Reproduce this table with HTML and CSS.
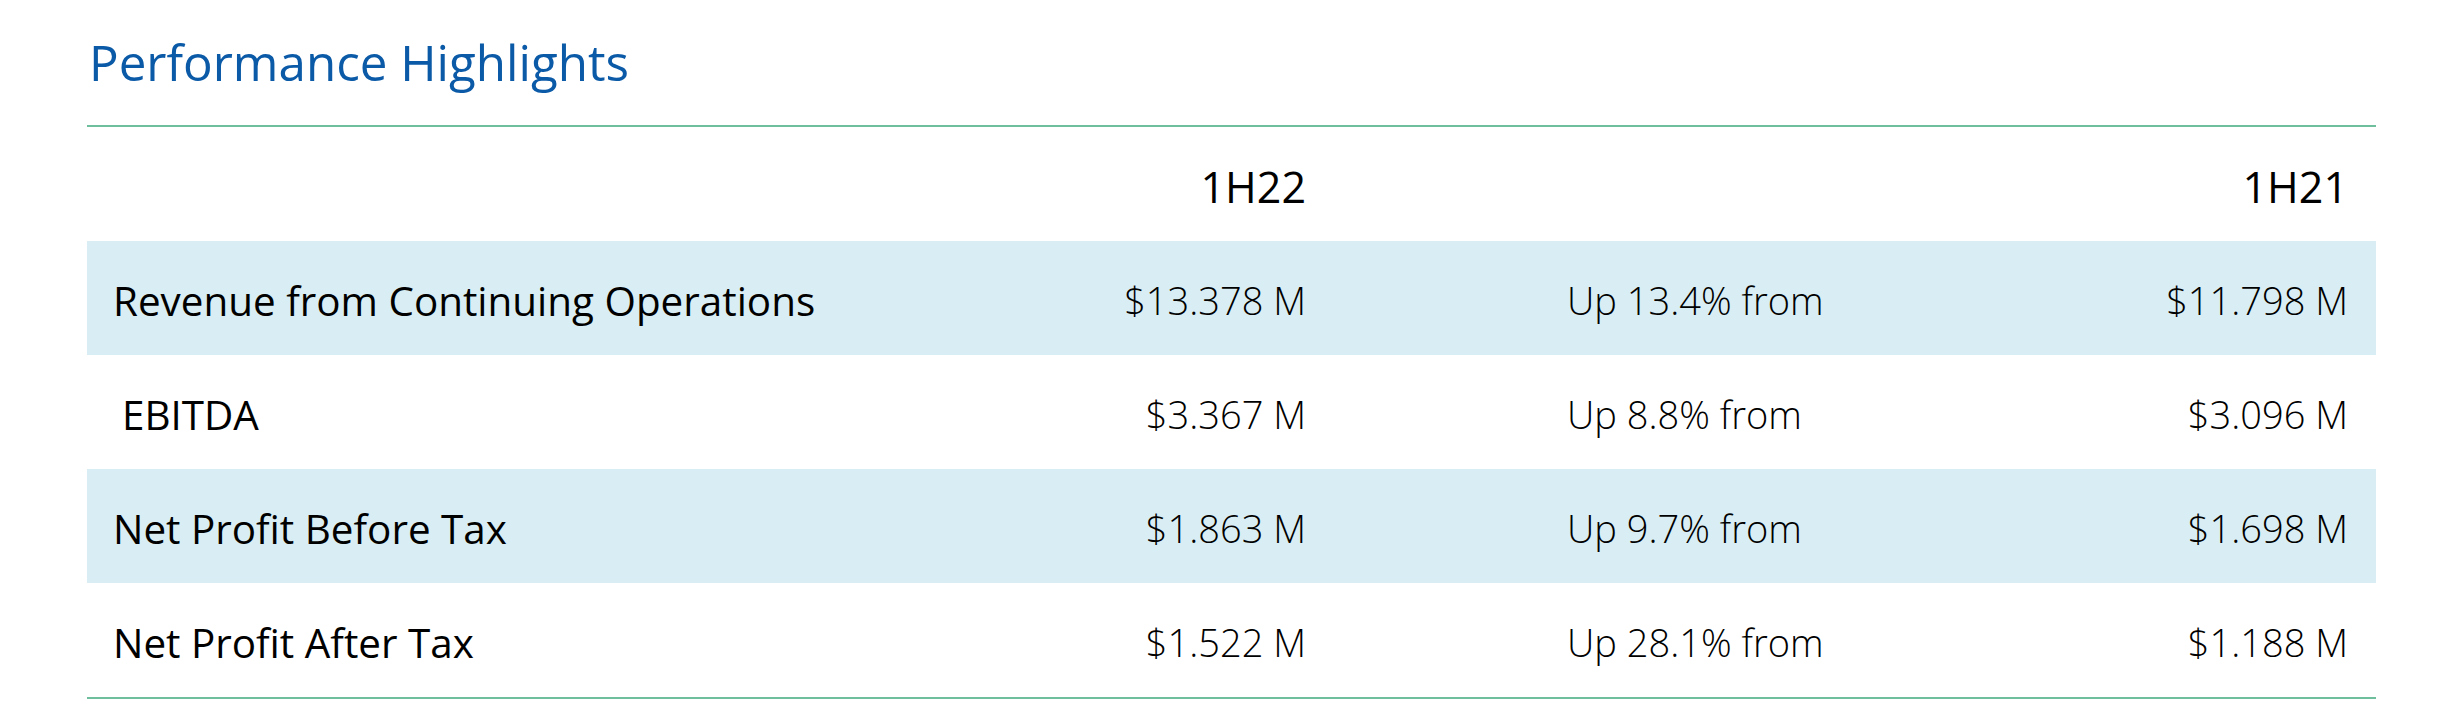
FILE: index.html
```html
<!DOCTYPE html>
<html lang="en">
<head>
<meta charset="utf-8">
<title>Performance Highlights</title>
<link rel="stylesheet" href="styles.css">
</head>
<body>
<div class="page">
  <h1 class="title">Performance Highlights</h1>
  <div class="table">
    <div class="row head">
      <div class="cell label"></div>
      <div class="cell value">1H22</div>
      <div class="cell change"></div>
      <div class="cell prior">1H21</div>
    </div>
    <div class="row shaded">
      <div class="cell label">Revenue from Continuing Operations</div>
      <div class="cell value">$13.378 M</div>
      <div class="cell change">Up 13.4% from</div>
      <div class="cell prior">$11.798 M</div>
    </div>
    <div class="row">
      <div class="cell label indent">EBITDA</div>
      <div class="cell value">$3.367 M</div>
      <div class="cell change">Up 8.8% from</div>
      <div class="cell prior">$3.096 M</div>
    </div>
    <div class="row shaded">
      <div class="cell label">Net Profit Before Tax</div>
      <div class="cell value">$1.863 M</div>
      <div class="cell change">Up 9.7% from</div>
      <div class="cell prior">$1.698 M</div>
    </div>
    <div class="row">
      <div class="cell label">Net Profit After Tax</div>
      <div class="cell value">$1.522 M</div>
      <div class="cell change">Up 28.1% from</div>
      <div class="cell prior">$1.188 M</div>
    </div>
  </div>
</div>
</body>
</html>
```

FILE: styles.css
```css
html, body {
  margin: 0;
  padding: 0;
  background: #ffffff;
}

.page {
  padding-left: 87px;
  width: 2289px;
  font-family: "Open Sans", "Noto Sans", sans-serif;
  color: #000000;
}

.title {
  margin: 0;
  height: 125px;
  box-sizing: border-box;
  padding-top: 28px;
  padding-left: 2px;
  font-size: 49.3px;
  line-height: 68px;
  font-weight: 400;
  color: #0b5aa7;
}

.table {
  border-top: 2px solid #6fbe9d;
  border-bottom: 2px solid #6fbe9d;
}

.row {
  display: grid;
  grid-template-columns: 831px 414px 563px 481px;
  height: 114px;
  align-items: center;
}

.row.shaded {
  background: #d9eef4;
}

.cell {
  padding-top: 4px;
  white-space: nowrap;
}

.label {
  padding-left: 26px;
  font-size: 40.4px;
  font-weight: 400;
}

.label.indent {
  padding-left: 35px;
}

.value,
.prior,
.change {
  font-size: 38px;
  font-weight: 300;
}

.value {
  text-align: right;
  padding-right: 26px;
}

.change {
  padding-left: 235px;
}

.prior {
  text-align: right;
  padding-right: 28px;
}

.head .value,
.head .prior {
  font-size: 43px;
  font-weight: 400;
}
```
